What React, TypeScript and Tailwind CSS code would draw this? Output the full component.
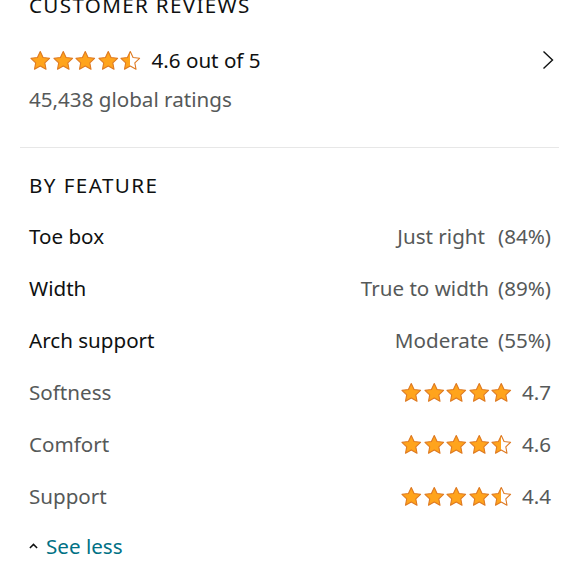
import { useId } from "react";

const STAR =
  "M12 1.6l3.1 6.6 7.1.9-5.2 4.9 1.3 7.1L12 17.6l-6.3 3.5 1.3-7.1-5.2-4.9 7.1-.9z";

function Star({ fill }: { fill: number }) {
  const id = useId();
  return (
    <svg viewBox="0 0 24 23" className="h-[21px] w-[22.5px]">
      <defs>
        <linearGradient id={id} x1="0" x2="1" y1="0" y2="0">
          <stop offset={`${fill * 100}%`} stopColor="#FFA41C" />
          <stop offset={`${fill * 100}%`} stopColor="#FFFFFF" />
        </linearGradient>
      </defs>
      <path d={STAR} fill={`url(#${id})`} stroke="#DE7921" strokeWidth="1.2" strokeLinejoin="round" />
    </svg>
  );
}

function Stars({ value }: { value: number }) {
  return (
    <div className="flex items-center">
      {[0, 1, 2, 3, 4].map((i) => {
        const f = Math.max(0, Math.min(1, value - i));
        const fill = f >= 0.75 ? 1 : f >= 0.25 ? 0.5 : 0;
        return <Star key={i} fill={fill} />;
      })}
    </div>
  );
}

const fit = [
  { label: "Toe box", value: "Just right", pct: "(84%)", gap: "gap-[13px]" },
  { label: "Width", value: "True to width", pct: "(89%)", gap: "gap-[9px]" },
  { label: "Arch support", value: "Moderate", pct: "(55%)", gap: "gap-[9px]" },
];

const rated = [
  { label: "Softness", rating: 4.7, stars: 5 },
  { label: "Comfort", rating: 4.6, stars: 4.5 },
  { label: "Support", rating: 4.4, stars: 4.5 },
];

export default function App() {
  return (
    <div className="h-[580px] w-[579px] overflow-hidden bg-white font-['Noto_Sans',sans-serif] text-[20.6px] leading-[28px] text-[#0F1111]">
      <div className="-mt-[9px] px-[29px]">
        <div className="h-[28px] tracking-[0.065em]">CUSTOMER REVIEWS</div>
        <div className="mt-[27px] flex h-[28px] items-center">
          <Stars value={4.5} />
          <span className="ml-[10px]">4.6 out of 5</span>
          <svg viewBox="0 0 12 20" className="ml-auto mr-[-4px] h-[20px] w-[12px]">
            <path d="M1.5 1.5L10.5 10L1.5 18.5" fill="none" stroke="#0F1111" strokeWidth="1.4" />
          </svg>
        </div>
        <div className="mt-[11px] h-[28px] text-[#565959]">45,438 global ratings</div>
      </div>
      <div className="mx-[20px] mt-[34px] h-px bg-[#E7E7E7]" />
      <div className="px-[28px]">
        <div className="mt-[23px] h-[28px] pl-px tracking-[0.07em]">BY FEATURE</div>
        <div className="mt-[23px] flex flex-col gap-[24px]">
          {fit.map((r) => (
            <div key={r.label} className="flex h-[28px] items-center justify-between pl-px">
              <span>{r.label}</span>
              <span className={`flex text-[#565959] ${r.gap}`}>
                <span>{r.value}</span>
                <span>{r.pct}</span>
              </span>
            </div>
          ))}
          {rated.map((r) => (
            <div key={r.label} className="flex h-[28px] items-center justify-between pl-px text-[#565959]">
              <span>{r.label}</span>
              <span className="flex items-center gap-[9px]">
                <Stars value={r.stars} />
                <span>{r.rating}</span>
              </span>
            </div>
          ))}
          <div className="-mt-[2px] flex h-[28px] items-center pl-px">
            <svg viewBox="0 0 10 6" className="h-[6px] w-[9px]">
              <path d="M1 5.2L5 1.2L9 5.2" fill="none" stroke="#0F1111" strokeWidth="1.7" />
            </svg>
            <span className="ml-[8px] text-[#007185]">See less</span>
          </div>
        </div>
      </div>
    </div>
  );
}
